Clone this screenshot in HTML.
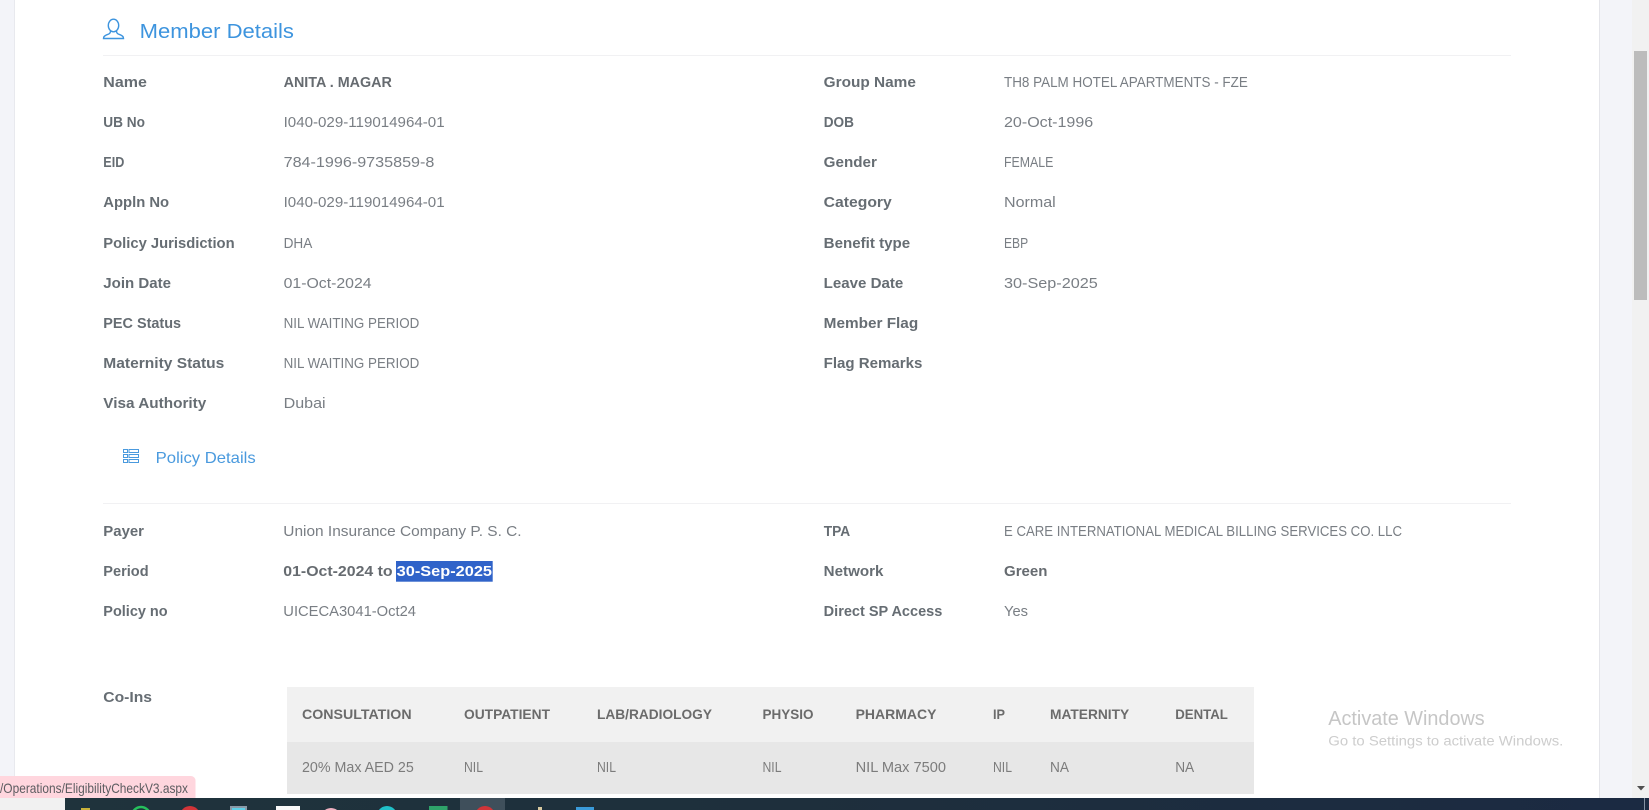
<!DOCTYPE html>
<html lang="en">
<head>
<meta charset="utf-8">
<title>Member Details</title>
<style>
html,body{margin:0;padding:0;width:1649px;height:810px;overflow:hidden;background:#fff}
svg{display:block}
text{font-family:"Liberation Sans",Arial,sans-serif}
.l{font-size:14.5px;font-weight:700;fill:#666d73}
.v{font-size:14.5px;fill:#797e84}
.b{font-size:14.5px;font-weight:700;fill:#666b70}
.th{font-size:14px;font-weight:700;fill:#6b6b6b}
.td{font-size:14.5px;fill:#7c7c7c}
</style>
</head>
<body>
<svg xmlns="http://www.w3.org/2000/svg" width="1649" height="810" viewBox="0 0 1649 810">
<defs>
<linearGradient id="tb" x1="0" x2="1" y1="0" y2="0">
<stop offset="0" stop-color="#1f333c"/><stop offset="0.45" stop-color="#1e2f3c"/><stop offset="1" stop-color="#1b2a42"/>
</linearGradient>
</defs>
<rect width="1649" height="810" fill="#f3f4f9"/>
<rect x="14.5" y="0" width="1584.5" height="798" fill="#fff"/>
<rect x="14" y="0" width="1" height="798" fill="#e8e9ee"/>
<rect x="1599" y="0" width="1" height="798" fill="#e4e5ea"/>
<rect x="1632" y="0" width="17" height="798" fill="#f1f1f1"/>
<rect x="1634" y="51" width="13" height="249" fill="#bcbcbc"/>
<path d="M1637 786h8l-4 4.500z" fill="#505050"/>

<!-- Member Details heading -->
<g fill="none" stroke="#3d94de" stroke-width="1.400">
<ellipse cx="113.500" cy="25.500" rx="5.200" ry="6.300"/>
<path d="M110.500 31C110.500 33.200 109.500 33.800 107 34.700C104.500 35.600 103.500 36.600 103.500 38.500H123.500C123.500 36.600 122.500 35.600 120 34.700C117.500 33.800 116.500 33.200 116.500 31"/>
</g>
<text x="139.700" y="38" font-size="20" fill="#3d94de" textLength="154.200" lengthAdjust="spacingAndGlyphs">Member Details</text>
<rect x="103" y="55" width="1408" height="1" fill="#f1f1f3"/>

<!-- Left column -->
<text class="l" x="103.300" y="87" textLength="43.600" lengthAdjust="spacingAndGlyphs">Name</text>
<text class="b" x="283.600" y="87" textLength="108.300" lengthAdjust="spacingAndGlyphs">ANITA . MAGAR</text>
<text class="l" x="103.300" y="127" textLength="41.700" lengthAdjust="spacingAndGlyphs">UB No</text>
<text class="v" x="283.600" y="127" textLength="161" lengthAdjust="spacingAndGlyphs">I040-029-119014964-01</text>
<text class="l" x="103.300" y="167" textLength="21" lengthAdjust="spacingAndGlyphs">EID</text>
<text class="v" x="283.600" y="167" textLength="150.800" lengthAdjust="spacingAndGlyphs">784-1996-9735859-8</text>
<text class="l" x="103.300" y="207" textLength="65.800" lengthAdjust="spacingAndGlyphs">Appln No</text>
<text class="v" x="283.600" y="207" textLength="161" lengthAdjust="spacingAndGlyphs">I040-029-119014964-01</text>
<text class="l" x="103.300" y="248" textLength="131.300" lengthAdjust="spacingAndGlyphs">Policy Jurisdiction</text>
<text class="v" x="283.600" y="248" textLength="28.700" lengthAdjust="spacingAndGlyphs">DHA</text>
<text class="l" x="103.300" y="288" textLength="67.700" lengthAdjust="spacingAndGlyphs">Join Date</text>
<text class="v" x="283.600" y="288" textLength="88" lengthAdjust="spacingAndGlyphs">01-Oct-2024</text>
<text class="l" x="103.300" y="328" textLength="77.800" lengthAdjust="spacingAndGlyphs">PEC Status</text>
<text class="v" x="283.600" y="328" textLength="135.700" lengthAdjust="spacingAndGlyphs">NIL WAITING PERIOD</text>
<text class="l" x="103.300" y="368" textLength="121" lengthAdjust="spacingAndGlyphs">Maternity Status</text>
<text class="v" x="283.600" y="368" textLength="135.700" lengthAdjust="spacingAndGlyphs">NIL WAITING PERIOD</text>
<text class="l" x="103.300" y="408" textLength="103" lengthAdjust="spacingAndGlyphs">Visa Authority</text>
<text class="v" x="283.600" y="408" textLength="42" lengthAdjust="spacingAndGlyphs">Dubai</text>

<!-- Right column -->
<text class="l" x="823.700" y="87" textLength="92.200" lengthAdjust="spacingAndGlyphs">Group Name</text>
<text class="v" x="1004" y="87" textLength="243.800" lengthAdjust="spacingAndGlyphs">TH8 PALM HOTEL APARTMENTS - FZE</text>
<text class="l" x="823.700" y="127" textLength="30.200" lengthAdjust="spacingAndGlyphs">DOB</text>
<text class="v" x="1004" y="127" textLength="89.200" lengthAdjust="spacingAndGlyphs">20-Oct-1996</text>
<text class="l" x="823.700" y="167" textLength="53.200" lengthAdjust="spacingAndGlyphs">Gender</text>
<text class="v" x="1004" y="167" textLength="49.400" lengthAdjust="spacingAndGlyphs">FEMALE</text>
<text class="l" x="823.700" y="207" textLength="68.100" lengthAdjust="spacingAndGlyphs">Category</text>
<text class="v" x="1004" y="207" textLength="51.700" lengthAdjust="spacingAndGlyphs">Normal</text>
<text class="l" x="823.700" y="248" textLength="86.500" lengthAdjust="spacingAndGlyphs">Benefit type</text>
<text class="v" x="1004" y="248" textLength="24.100" lengthAdjust="spacingAndGlyphs">EBP</text>
<text class="l" x="823.700" y="288" textLength="79.600" lengthAdjust="spacingAndGlyphs">Leave Date</text>
<text class="v" x="1004" y="288" textLength="93.800" lengthAdjust="spacingAndGlyphs">30-Sep-2025</text>
<text class="l" x="823.700" y="328" textLength="94.500" lengthAdjust="spacingAndGlyphs">Member Flag</text>
<text class="l" x="823.700" y="368" textLength="98.700" lengthAdjust="spacingAndGlyphs">Flag Remarks</text>

<!-- Policy Details heading -->
<g fill="none" stroke="#4a9ade" stroke-width="1">
<rect x="123.500" y="449.500" width="4" height="3"/><rect x="129" y="449.500" width="9.500" height="3"/>
<rect x="123.500" y="454.500" width="4" height="3"/><rect x="129" y="454.500" width="9.500" height="3"/>
<rect x="123.500" y="459.500" width="4" height="3"/><rect x="129" y="459.500" width="9.500" height="3"/>
</g>
<text x="155.700" y="463" font-size="16" fill="#4a9ade" textLength="100" lengthAdjust="spacingAndGlyphs">Policy Details</text>
<rect x="103" y="503" width="1408" height="1" fill="#f1f1f3"/>

<!-- Policy rows -->
<text class="l" x="103.300" y="536" textLength="40.700" lengthAdjust="spacingAndGlyphs">Payer</text>
<text class="v" x="283.300" y="536" textLength="238.300" lengthAdjust="spacingAndGlyphs">Union Insurance Company P. S. C.</text>
<text class="l" x="103.300" y="576" textLength="45.300" lengthAdjust="spacingAndGlyphs">Period</text>
<text class="b" x="283.300" y="576" textLength="109.300" lengthAdjust="spacingAndGlyphs">01-Oct-2024 to</text>
<rect x="396" y="561" width="96.700" height="20.700" fill="#3063c9"/>
<text x="396.700" y="576" font-size="14.500" font-weight="700" fill="#fff" textLength="95.300" lengthAdjust="spacingAndGlyphs">30-Sep-2025</text>
<text class="l" x="103.300" y="616" textLength="64.300" lengthAdjust="spacingAndGlyphs">Policy no</text>
<text class="v" x="283.300" y="616" textLength="132.700" lengthAdjust="spacingAndGlyphs">UICECA3041-Oct24</text>

<text class="l" x="823.700" y="536" textLength="26.500" lengthAdjust="spacingAndGlyphs">TPA</text>
<text class="v" x="1004" y="536" textLength="398" lengthAdjust="spacingAndGlyphs">E CARE INTERNATIONAL MEDICAL BILLING SERVICES CO. LLC</text>
<text class="l" x="823.700" y="576" textLength="59.700" lengthAdjust="spacingAndGlyphs">Network</text>
<text class="b" x="1004" y="576" textLength="43.500" lengthAdjust="spacingAndGlyphs">Green</text>
<text class="l" x="823.700" y="616" textLength="118.600" lengthAdjust="spacingAndGlyphs">Direct SP Access</text>
<text class="v" x="1004" y="616" textLength="24" lengthAdjust="spacingAndGlyphs">Yes</text>

<!-- Co-Ins table -->
<text class="l" x="103.300" y="702" textLength="48.700" lengthAdjust="spacingAndGlyphs">Co-Ins</text>
<rect x="287" y="687" width="967" height="55" fill="#f1f1f1"/>
<rect x="287" y="742" width="967" height="52" fill="#e7e7e7"/>
<text class="th" x="302" y="719" textLength="109.600" lengthAdjust="spacingAndGlyphs">CONSULTATION</text>
<text class="th" x="464" y="719" textLength="86" lengthAdjust="spacingAndGlyphs">OUTPATIENT</text>
<text class="th" x="597" y="719" textLength="115" lengthAdjust="spacingAndGlyphs">LAB/RADIOLOGY</text>
<text class="th" x="762.500" y="719" textLength="51" lengthAdjust="spacingAndGlyphs">PHYSIO</text>
<text class="th" x="855.600" y="719" textLength="80.800" lengthAdjust="spacingAndGlyphs">PHARMACY</text>
<text class="th" x="993" y="719" textLength="12" lengthAdjust="spacingAndGlyphs">IP</text>
<text class="th" x="1050" y="719" textLength="79.200" lengthAdjust="spacingAndGlyphs">MATERNITY</text>
<text class="th" x="1175.200" y="719" textLength="52.700" lengthAdjust="spacingAndGlyphs">DENTAL</text>
<text class="td" x="302" y="772" textLength="111.800" lengthAdjust="spacingAndGlyphs">20% Max AED 25</text>
<text class="td" x="464" y="772" textLength="19" lengthAdjust="spacingAndGlyphs">NIL</text>
<text class="td" x="597" y="772" textLength="19" lengthAdjust="spacingAndGlyphs">NIL</text>
<text class="td" x="762.500" y="772" textLength="19" lengthAdjust="spacingAndGlyphs">NIL</text>
<text class="td" x="855.600" y="772" textLength="90.400" lengthAdjust="spacingAndGlyphs">NIL Max 7500</text>
<text class="td" x="993" y="772" textLength="19" lengthAdjust="spacingAndGlyphs">NIL</text>
<text class="td" x="1050" y="772" textLength="19" lengthAdjust="spacingAndGlyphs">NA</text>
<text class="td" x="1175.200" y="772" textLength="19" lengthAdjust="spacingAndGlyphs">NA</text>

<!-- Activate Windows watermark -->
<text x="1328.300" y="725" font-size="20" fill="#c6c6c6" textLength="156.400" lengthAdjust="spacingAndGlyphs">Activate Windows</text>
<text x="1328.300" y="745.500" font-size="13.500" fill="#cdcdcd" textLength="235" lengthAdjust="spacingAndGlyphs">Go to Settings to activate Windows.</text>

<!-- Left strip under tooltip -->
<rect x="0" y="798" width="65" height="12" fill="#f1f1f1"/>
<!-- Tooltip -->
<path d="M0 776H191a4.500 4.500 0 0 1 4.500 4.500V798H0z" fill="#ffd6de"/>
<text x="0" y="793" font-size="14" fill="#5c5c60" textLength="188" lengthAdjust="spacingAndGlyphs">/Operations/EligibilityCheckV3.aspx</text>

<!-- Taskbar -->
<rect x="65" y="798" width="1584" height="12" fill="url(#tb)"/>
<rect x="460" y="798" width="45" height="12" fill="#3f4f5b"/>
<rect x="1644" y="798" width="1" height="12" fill="#8592a3"/>
<rect x="81" y="808" width="9" height="2" fill="#c9b23a"/>
<circle cx="141" cy="816" r="9" fill="none" stroke="#25c05c" stroke-width="2.500"/>
<circle cx="190" cy="816" r="10" fill="#d13438"/>
<rect x="230" y="806" width="17" height="4" fill="#8a9aa8"/>
<rect x="232" y="808" width="13" height="2" fill="#5fd0e8"/>
<rect x="276" y="806" width="24" height="4" fill="#f8f8f8"/>
<circle cx="331" cy="818" r="10" fill="#eeb0c0"/>
<circle cx="387" cy="816" r="10" fill="#20c0c8"/>
<rect x="429" y="806" width="18.500" height="4" fill="#2ea36a"/>
<circle cx="485" cy="816" r="10" fill="#d13438"/>
<rect x="538" y="807" width="4" height="3" fill="#d8c9a0"/>
<rect x="576" y="807" width="18" height="3" fill="#3a9ad9"/>
</svg>
</body>
</html>
